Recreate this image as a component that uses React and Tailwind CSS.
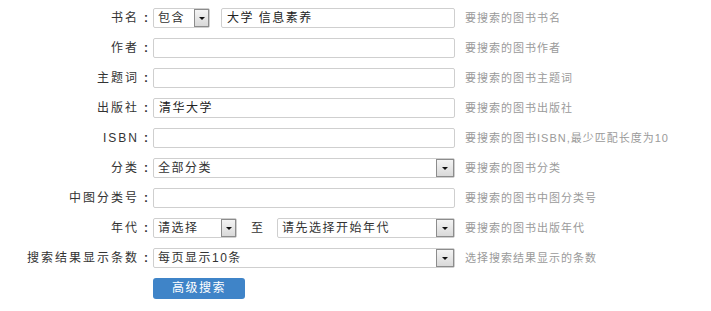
import React from "react";

const FONT = { fontFamily: '"Liberation Sans", "Noto Sans CJK SC", sans-serif' };

const Arrow = ({ wide }) => (
	<div
		className={`${wide ? "w-[18px]" : "w-[15px]"} shrink-0 self-stretch flex items-center justify-center border border-[#8c8c8c] bg-gradient-to-b from-[#f4f4f4] to-[#d9d9d9]`}
	>
		<div className="w-0 h-0 border-l-[3px] border-r-[3px] border-t-[3px] border-l-transparent border-r-transparent border-t-[#111]" />
	</div>
);

const Select = ({ value, className = "", wide }) => (
	<div
		className={`flex h-[20px] items-center border border-[#cfcfcf] rounded-[2px] bg-white text-[12px] tracking-[1.5px] text-[#333] ${className}`}
	>
		<span className="flex-1 pl-[4px] whitespace-nowrap overflow-hidden">{value}</span>
		<Arrow wide={wide} />
	</div>
);

const Input = ({ value = "", className = "" }) => (
	<div
		className={`flex h-[20px] items-center border border-[#cfcfcf] rounded-[2px] bg-white pl-[5px] text-[12px] tracking-[1.5px] text-[#222] ${className}`}
	>
		{value}
	</div>
);

const Row = ({ label, help, children }) => (
	<div className="flex h-[30px] items-center">
		<div className="w-[139px] shrink-0 text-right text-[12px] tracking-[2px] text-[#333] whitespace-nowrap">
			{label}
		</div>
		<span className="w-[14px] shrink-0 pl-[5px] text-[12px] font-bold text-[#333]">:</span>
		<div className="w-[302px] shrink-0 flex items-center">{children}</div>
		{help && (
			<span className="ml-[10px] text-[11px] tracking-[1px] text-[#9a9a9a] whitespace-nowrap">{help}</span>
		)}
	</div>
);

export default function App() {
	return (
		<div className="w-[711px] h-[311px] bg-white pt-[3px] overflow-hidden" style={FONT}>
			<Row label="书名" help="要搜索的图书书名">
				<Select value="包含" className="w-[57px]" />
				<Input value="大学 信息素养" className="ml-[11px] flex-1" />
			</Row>
			<Row label="作者" help="要搜索的图书作者">
				<Input className="flex-1" />
			</Row>
			<Row label="主题词" help="要搜索的图书主题词">
				<Input className="flex-1" />
			</Row>
			<Row label="出版社" help="要搜索的图书出版社">
				<Input value="清华大学" className="flex-1" />
			</Row>
			<Row label="ISBN" help="要搜索的图书ISBN,最少匹配长度为10">
				<Input className="flex-1" />
			</Row>
			<Row label="分类" help="要搜索的图书分类">
				<Select value="全部分类" className="flex-1" wide />
			</Row>
			<Row label="中图分类号" help="要搜索的图书中图分类号">
				<Input className="flex-1" />
			</Row>
			<Row label="年代" help="要搜索的图书出版年代">
				<Select value="请选择" className="w-[84px]" />
				<span className="w-[40px] text-center text-[12px] text-[#333]">至</span>
				<Select value="请先选择开始年代" className="flex-1" wide />
			</Row>
			<Row label="搜索结果显示条数" help="选择搜索结果显示的条数">
				<Select value="每页显示10条" className="flex-1" wide />
			</Row>
			<div className="flex h-[30px] items-center pl-[153px]">
				<button className="w-[92px] h-[21px] rounded-[3px] bg-[#3f84c8] text-white text-[12px] tracking-[1.5px]">
					高级搜索
				</button>
			</div>
		</div>
	);
}
